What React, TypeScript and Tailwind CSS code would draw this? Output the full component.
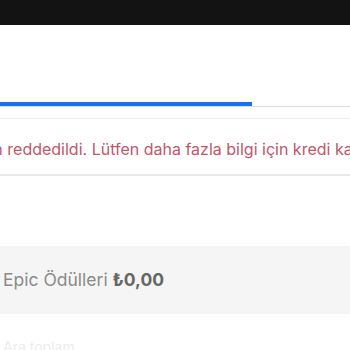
export default function App() {
    return (
        <div className="h-[350px] w-[350px] overflow-hidden bg-white font-['Inter',sans-serif]">
            <div className="h-[25px] bg-[#131313]" />

            <div className="mt-[77px] flex border-b border-[#dcdcdc]">
                <div className="h-[4px] w-[252px] bg-[#1a73e8]" />
            </div>
            <div className="mt-[11px] h-px bg-[#eceef0]" />

            <div className="mt-[14px] flex h-[32px] items-center overflow-hidden whitespace-nowrap">
                <p className="ml-[-74px] text-[16px] text-[#c2566a]">
                    tarafından reddedildi. Lütfen daha fazla bilgi için kredi kartı şirketinizle iletişime geçin.
                </p>
            </div>
            <div className="mt-[9px] h-[2px] bg-[#e8e8e8]" />

            <div className="mt-[70px] flex h-[68px] items-center bg-[#f5f5f5] pl-[3px]">
                <p className="text-[17.5px] text-[#8a8a8a]">
                    Epic Ödülleri <span className="font-bold text-[#666666]">₺0,00</span>
                </p>
            </div>

            <div className="mt-[22px] pl-[3px] text-[14px] text-[#ececec]">Ara toplam</div>
        </div>
    );
}
